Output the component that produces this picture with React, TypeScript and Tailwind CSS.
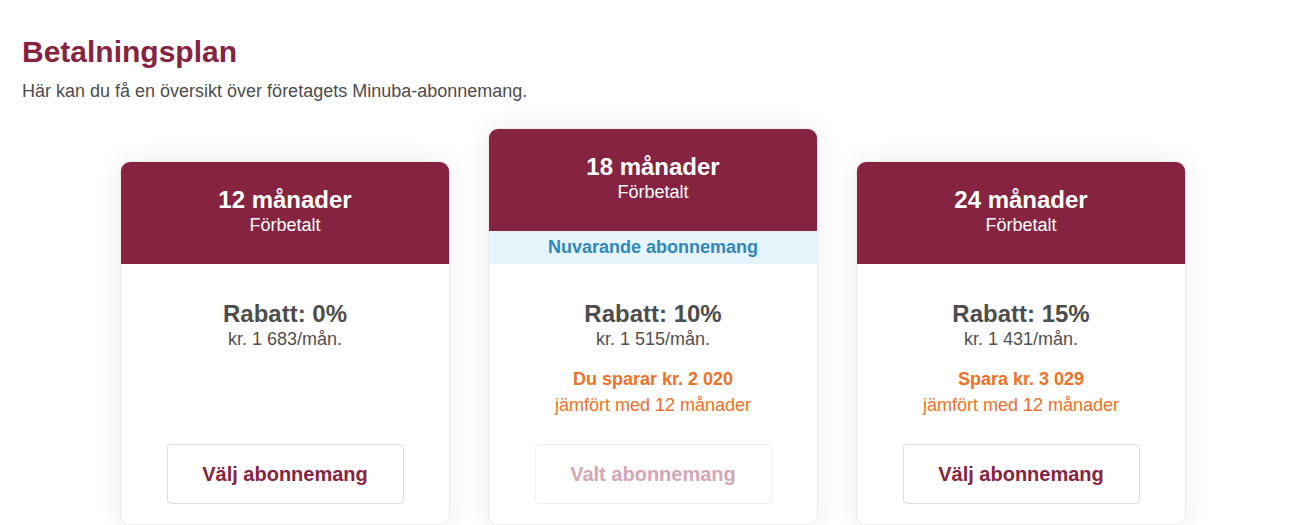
import React from "react";

type Plan = {
  months: string;
  discount: string;
  price: string;
  save?: string;
  current?: boolean;
};

const plans: Plan[] = [
  { months: "12 månader", discount: "Rabatt: 0%", price: "kr. 1 683/mån." },
  {
    months: "18 månader",
    discount: "Rabatt: 10%",
    price: "kr. 1 515/mån.",
    save: "Du sparar kr. 2 020",
    current: true,
  },
  {
    months: "24 månader",
    discount: "Rabatt: 15%",
    price: "kr. 1 431/mån.",
    save: "Spara kr. 3 029",
  },
];

function Card({ plan }: { plan: Plan }) {
  return (
    <div className="w-[330px] shrink-0 rounded-[10px] border border-[#ebebeb] bg-white shadow-[0_0_28px_rgba(0,0,0,0.07)] overflow-hidden flex flex-col">
      <div className="h-[102px] bg-[#862341] pt-[24px] text-center text-white">
        <div className="text-[24px] font-bold leading-[28px]">{plan.months}</div>
        <div className="text-[18px] leading-[22px]">Förbetalt</div>
      </div>
      {plan.current && (
        <div className="h-[33px] bg-[#e6f4fc] flex items-center justify-center text-[18px] font-bold text-[#2f88bd]">
          Nuvarande abonnemang
        </div>
      )}
      <div className="pt-[36px] pb-[20px] text-center">
        <div className="text-[24px] font-bold leading-[28px] text-[#4d4d4d]">{plan.discount}</div>
        <div className="text-[18px] leading-[22px] text-[#505050]">{plan.price}</div>
        <div className="h-[94px] pt-[18px] text-[#f07026]">
          {plan.save && (
            <>
              <div className="text-[18px] font-bold leading-[22px]">{plan.save}</div>
              <div className="mt-[4px] text-[18px] leading-[22px]">jämfört med 12 månader</div>
            </>
          )}
        </div>
        {plan.current ? (
          <div className="mx-auto w-[237px] h-[60px] rounded-[4px] border border-[#efefef] flex items-center justify-center text-[20px] font-bold text-[#d3a7b6]">
            Valt abonnemang
          </div>
        ) : (
          <div className="mx-auto w-[237px] h-[60px] rounded-[4px] border border-[#dcdcdc] flex items-center justify-center text-[20px] font-bold text-[#862341]">
            Välj abonnemang
          </div>
        )}
      </div>
    </div>
  );
}

export default function App() {
  return (
    <div
      className="min-h-[525px] bg-white px-[22px] pt-[34px]"
      style={{ fontFamily: '"Liberation Sans", Arial, sans-serif' }}
    >
      <h1 className="text-[30px] font-bold leading-[36px] text-[#862341]">Betalningsplan</h1>
      <p className="mt-[11px] text-[18px] leading-[20px] text-[#4d4d4d]">
        Här kan du få en översikt över företagets Minuba-abonnemang.
      </p>
      <div className="mt-[27px] ml-[98px] flex items-end gap-[38px]">
        {plans.map((p) => (
          <Card key={p.months} plan={p} />
        ))}
      </div>
    </div>
  );
}
